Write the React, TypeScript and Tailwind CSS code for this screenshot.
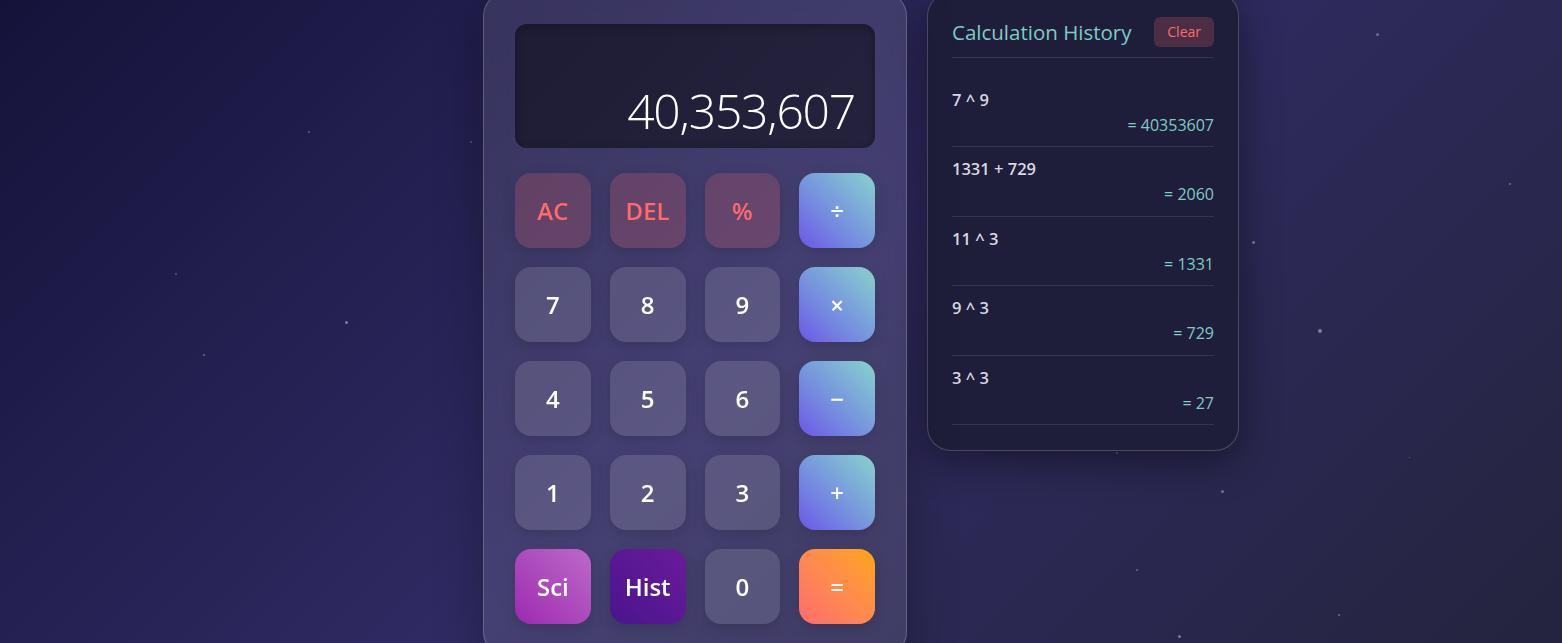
import React from "react";

const stars = [
  { x: 308, y: 131, s: 2, o: 0.3 },
  { x: 470, y: 141, s: 2, o: 0.25 },
  { x: 175, y: 273, s: 2, o: 0.25 },
  { x: 345, y: 321, s: 3, o: 0.4 },
  { x: 203, y: 354, s: 2, o: 0.35 },
  { x: 1376, y: 33, s: 3, o: 0.3 },
  { x: 1509, y: 183, s: 2, o: 0.35 },
  { x: 1252, y: 241, s: 3, o: 0.4 },
  { x: 1199, y: 281, s: 3, o: 0.3 },
  { x: 1318, y: 329, s: 4, o: 0.4 },
  { x: 963, y: 349, s: 2, o: 0.2 },
  { x: 1116, y: 452, s: 2, o: 0.3 },
  { x: 1409, y: 457, s: 1, o: 0.35 },
  { x: 1221, y: 490, s: 3, o: 0.35 },
  { x: 1136, y: 569, s: 2, o: 0.3 },
  { x: 1338, y: 614, s: 2, o: 0.35 },
  { x: 1178, y: 635, s: 3, o: 0.4 },
];

type Kind = "num" | "fn" | "op" | "eq" | "sci" | "hist";

const keys: { label: string; kind: Kind }[] = [
  { label: "AC", kind: "fn" },
  { label: "DEL", kind: "fn" },
  { label: "%", kind: "fn" },
  { label: "÷", kind: "op" },
  { label: "7", kind: "num" },
  { label: "8", kind: "num" },
  { label: "9", kind: "num" },
  { label: "×", kind: "op" },
  { label: "4", kind: "num" },
  { label: "5", kind: "num" },
  { label: "6", kind: "num" },
  { label: "−", kind: "op" },
  { label: "1", kind: "num" },
  { label: "2", kind: "num" },
  { label: "3", kind: "num" },
  { label: "+", kind: "op" },
  { label: "Sci", kind: "sci" },
  { label: "Hist", kind: "hist" },
  { label: "0", kind: "num" },
  { label: "=", kind: "eq" },
];

const kindClass: Record<Kind, string> = {
  num: "bg-white/[0.12] text-white",
  fn: "bg-[#ff6b6b]/20 text-[#ff6b6b]",
  op: "bg-linear-to-tr from-[#6c54e6] to-[#88d2cc] text-white",
  eq: "bg-linear-to-tr from-[#ff6b6b] to-[#ffa502] text-white",
  sci: "bg-linear-to-tr from-[#9c27b0] to-[#bd68c8] text-white",
  hist: "bg-linear-to-tr from-[#4a148c] to-[#6a1b9a] text-white",
};

const history = [
  { expr: "7 ^ 9", result: "40353607" },
  { expr: "1331 + 729", result: "2060" },
  { expr: "11 ^ 3", result: "1331" },
  { expr: "9 ^ 3", result: "729" },
  { expr: "3 ^ 3", result: "27" },
];

export default function App() {
  return (
    <div className="relative h-screen overflow-hidden bg-[linear-gradient(135deg,#15123a,#302b63,#24243e)] font-['Open_Sans','Noto_Sans',sans-serif]">
      <div className="pointer-events-none absolute inset-0">
        {stars.map((s, i) => (
          <span
            key={i}
            className="absolute rounded-full bg-white"
            style={{ left: s.x, top: s.y, width: s.s, height: s.s, opacity: s.o }}
          />
        ))}
      </div>

      <div className="relative flex h-screen items-center justify-center pt-[5px] pl-[160px]">
        <div className="flex items-start gap-5">
          {/* calculator */}
          <div className="w-[424px] rounded-3xl border border-white/20 bg-white/10 p-[31px] shadow-[0_20px_50px_rgba(0,0,0,0.3)] backdrop-blur-md">
            <div className="mb-[25px] flex h-[124px] items-end justify-end rounded-xl bg-black/45 px-5 pb-[7px] shadow-[inset_0_2px_10px_rgba(0,0,0,0.3)]">
              <span className="pb-[6px] text-[48px] leading-none font-light tracking-tight text-white">
                40,353,607
              </span>
            </div>
            <div className="grid grid-cols-4 gap-[19px]">
              {keys.map((k) => (
                <button
                  key={k.label}
                  className={`flex h-[75px] items-center justify-center rounded-2xl text-2xl font-semibold shadow-[0_4px_14px_rgba(0,0,0,0.15)] ${kindClass[k.kind]}`}
                >
                  {k.label}
                </button>
              ))}
            </div>
          </div>

          {/* history */}
          <div className="w-[312px] rounded-3xl border border-white/20 bg-[#1e1d39]/95 p-6 pb-[25px] shadow-[0_10px_40px_rgba(0,0,0,0.45)]">
            <div className="flex items-center justify-between border-b border-white/10 pb-[9px]">
              <h2 className="text-[20.5px] text-[#80cbc4]">Calculation History</h2>
              <button className="rounded-md bg-[#ff6b6b]/20 px-[13px] py-[5px] text-sm text-[#ff6b6b]">
                Clear
              </button>
            </div>
            <div className="mt-5">
              {history.map((h) => (
                <div key={h.expr} className="border-b border-white/10 pt-[10px] pb-[10.5px]">
                  <div className="text-[16.5px] leading-6 font-semibold text-[#d9d7e0]">{h.expr}</div>
                  <div className="mt-[2px] text-right text-base leading-[22px] text-[#80cbc4]">
                    = {h.result}
                  </div>
                </div>
              ))}
            </div>
          </div>
        </div>
      </div>
    </div>
  );
}
